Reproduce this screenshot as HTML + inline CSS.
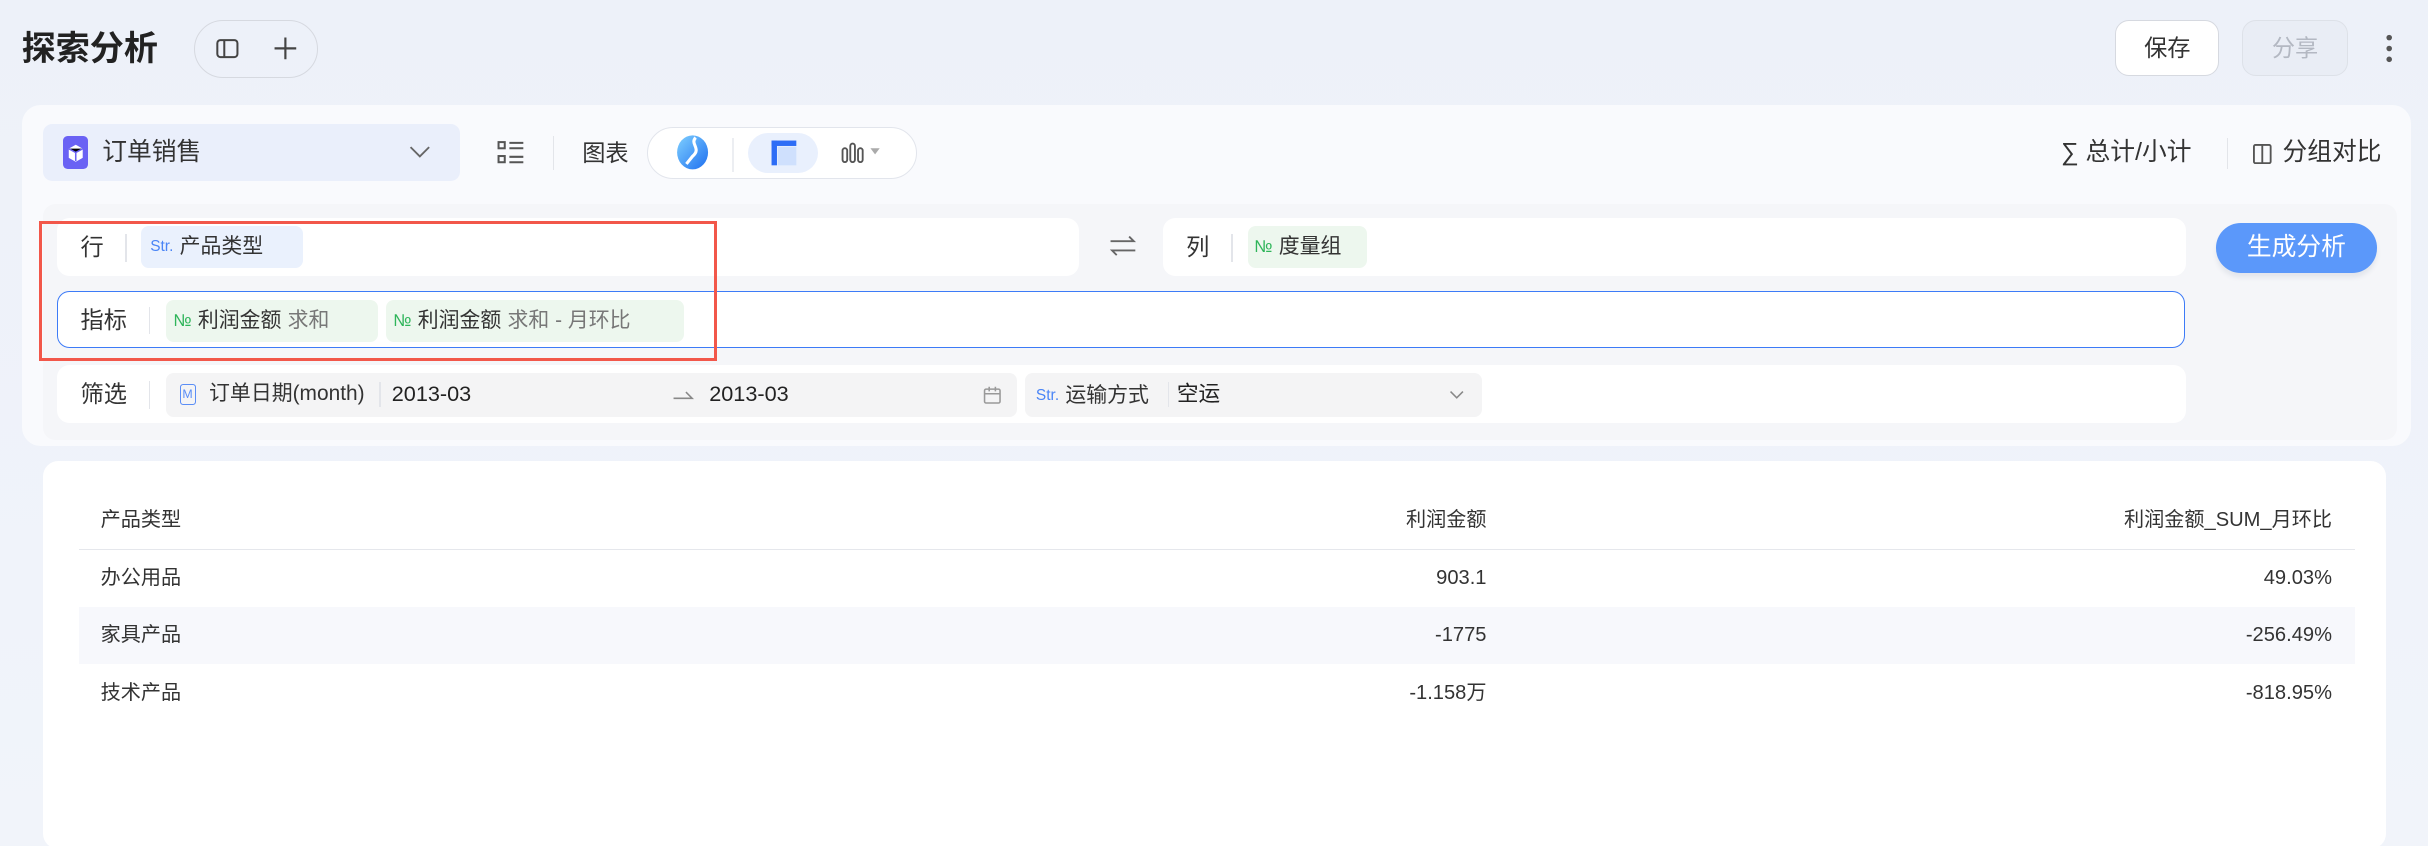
<!DOCTYPE html>
<html><head><meta charset="utf-8"><style>
html,body{margin:0;padding:0;width:2428px;height:846px;overflow:hidden;background:#eef2f9;}
#w{zoom:1.54847;width:1568px;height:547px;position:relative;font-family:"Liberation Sans","Noto Sans CJK SC",sans-serif;color:#333;background:linear-gradient(180deg,#edf1f9 0%,#f1f4fa 100%);}
.a{position:absolute;line-height:20px;white-space:nowrap;}
.t14{font-size:14px;}
.box{background:#fff;border-radius:8px;}
.lbl{font-size:15px;color:#333;}
.sep{width:1px;background:#e3e5ea;}
.chip{border-radius:5px;font-size:13.5px;height:27px;display:flex;align-items:center;gap:4px;line-height:27px;}
.num{color:#2fb55a;font-size:11px;}
.str{color:#4a85f6;font-size:10px;}
td{font-size:13px;color:#333;line-height:16px;vertical-align:middle;}
</style></head><body><div id="w">
<div class="a" style="left:14px;top:17px;line-height:30px;font-size:22px;font-weight:bold;color:#222;">探索分析</div>
<div class="a" style="left:125px;top:13px;width:79px;height:36px;border:1px solid #d6d9e0;border-radius:19px;"></div>
<svg class="a" style="left:139px;top:24px" width="16" height="16" viewBox="0 0 16 16"><rect x="1.5" y="2" width="13" height="11" rx="2" fill="none" stroke="#444" stroke-width="1.3"/><line x1="6" y1="2" x2="6" y2="13" stroke="#444" stroke-width="1.3"/></svg>
<svg class="a" style="left:176px;top:23px" width="16" height="16"><path d="M8 1v14M1 8h14" stroke="#444" stroke-width="1.4"/></svg>
<div class="a" style="left:1366px;top:13px;width:66px;height:35px;border:1px solid #d6d9e0;border-radius:9px;background:#fff;text-align:center;line-height:35px;font-size:15px;color:#333;">保存</div>
<div class="a" style="left:1448px;top:13px;width:67px;height:35px;border:1px solid #dde1e8;border-radius:9px;background:#e9edf5;text-align:center;line-height:35px;font-size:15px;color:#b3b8c2;">分享</div>
<svg class="a" style="left:1539px;top:21px" width="8" height="22"><circle cx="4" cy="3" r="1.8" fill="#555"/><circle cx="4" cy="10" r="1.8" fill="#555"/><circle cx="4" cy="17" r="1.8" fill="#555"/></svg>

<div class="a" style="left:14px;top:68px;width:1543px;height:220px;background:#f9fafd;border-radius:12px;"></div>
<div class="a" style="left:28px;top:80px;width:269px;height:37px;background:#eaeffb;border-radius:6px;"></div>
<div class="a" style="left:41px;top:88px;width:16px;height:21px;background:#6a62f4;border-radius:3px;"></div>
<svg class="a" style="left:44px;top:93px" width="10" height="12"><path d="M5 0.5L9.5 3v6L5 11.5 0.5 9V3z" fill="#fff"/><path d="M5 5v6M0.5 3L5 5.5 9.5 3" stroke="#6a62f4" stroke-width="1"/></svg>
<div class="a" style="left:66px;top:89px;font-size:16px;color:#333;">订单销售</div>
<svg class="a" style="left:264px;top:93px" width="14" height="10"><path d="M1 2l6 6 6-6" fill="none" stroke="#666" stroke-width="1.2"/></svg>
<svg class="a" style="left:321px;top:90px" width="18" height="18"><g fill="none" stroke="#555" stroke-width="1.3"><rect x="1" y="2" width="4" height="4"/><rect x="1" y="11" width="4" height="4"/><path d="M8 2.5h9M8 6h9M8 11.5h9M8 15h9"/></g></svg>
<div class="a sep" style="left:357px;top:88px;height:22px;"></div>
<div class="a" style="left:376px;top:89px;font-size:15px;">图表</div>
<div class="a" style="left:418px;top:82px;width:173px;height:32px;border:1px solid #e2e5ec;border-radius:17px;background:#fff;"></div>
<svg class="a" style="left:435px;top:86px" width="24" height="25"><defs><linearGradient id="g" x1="0" y1="0" x2="1" y2="1"><stop offset="0" stop-color="#7fd0ff"/><stop offset="1" stop-color="#1e6ff0"/></linearGradient></defs><ellipse cx="12" cy="12.5" rx="10" ry="11" fill="url(#g)"/><path d="M14 3c-4 4 4 7-2 12l-4 5" stroke="#fff" stroke-width="2" fill="none"/></svg>
<div class="a sep" style="left:473px;top:89px;height:22px;background:#eceef2"></div>
<div class="a" style="left:483px;top:86px;width:45px;height:26px;background:#e9f0fd;border-radius:13px;"></div>
<svg class="a" style="left:497px;top:90px" width="18" height="18"><rect x="1" y="1" width="16" height="3.5" fill="#2d6df6"/><rect x="1" y="1" width="3.5" height="16" fill="#2d6df6"/><rect x="5" y="5" width="12" height="12" fill="#cfe0fd"/></svg>
<svg class="a" style="left:543px;top:92px" width="26" height="14"><g fill="none" stroke="#555" stroke-width="1.2"><rect x="1" y="4" width="3" height="9" rx="1.5"/><rect x="6" y="1" width="3" height="12" rx="1.5"/><rect x="11" y="4" width="3" height="9" rx="1.5"/></g><path d="M19 4h6l-3 4z" fill="#aaa"/></svg>
<div class="a" style="left:1331px;top:89px;font-size:16px;color:#333;">∑ 总计/小计</div>
<div class="a sep" style="left:1438px;top:89px;height:20px;"></div>
<svg class="a" style="left:1455px;top:93px" width="12" height="13"><g fill="none" stroke="#555" stroke-width="1.2"><rect x="0.6" y="0.6" width="10.8" height="11.8" rx="1"/><path d="M6 0.6v11.8"/></g></svg>
<div class="a" style="left:1474px;top:89px;font-size:16px;color:#333;">分组对比</div>

<div class="a" style="left:28px;top:132px;width:1520px;height:152px;background:#f5f6f9;border-radius:8px;"></div>
<div class="a box" style="left:37px;top:141px;width:660px;height:37px;"></div>
<div class="a lbl" style="left:52px;top:150px;">行</div>
<div class="a sep" style="left:81px;top:151px;height:18px;"></div>
<div class="a chip" style="left:91px;top:146px;width:105px;background:#eaf1fd;"><span class="str" style="margin-left:6px;">Str.</span>产品类型</div>
<svg class="a" style="left:716px;top:152px" width="18" height="14"><g fill="none" stroke="#666" stroke-width="1.2"><path d="M1 4h15l-3-3M17 10H2l3 3"/></g></svg>
<div class="a box" style="left:751px;top:141px;width:661px;height:37px;"></div>
<div class="a lbl" style="left:766px;top:150px;">列</div>
<div class="a sep" style="left:795px;top:151px;height:18px;"></div>
<div class="a chip" style="left:806px;top:146px;width:77px;background:#edf7ee;"><span class="num" style="margin-left:4px">№</span>度量组</div>
<div class="a" style="left:1431px;top:144px;width:104px;height:32px;background:#5b98fa;border-radius:16px;color:#fff;font-size:16px;text-align:center;line-height:32px;box-shadow:0 3px 3px #e3e6ec;">生成分析</div>
<div class="a box" style="left:37px;top:188px;width:1374px;height:37px;border:1px solid #3d7bf7;box-sizing:border-box;"></div>
<div class="a lbl" style="left:52px;top:197px;">指标</div>
<div class="a sep" style="left:96px;top:198px;height:18px;"></div>
<div class="a chip" style="left:107px;top:194px;width:137px;background:#edf7ee;"><span class="num" style="margin-left:5px">№</span>利润金额<span style="color:#777">求和</span></div>
<div class="a chip" style="left:249px;top:194px;width:193px;background:#edf7ee;"><span class="num" style="margin-left:5px">№</span>利润金额<span style="color:#777">求和 - 月环比</span></div>
<div class="a box" style="left:37px;top:236px;width:1375px;height:37px;"></div>
<div class="a lbl" style="left:52px;top:245px;">筛选</div>
<div class="a sep" style="left:96px;top:246px;height:18px;"></div>
<div class="a" style="left:107px;top:241px;width:550px;height:28px;background:#f4f4f5;border-radius:5px;"></div>
<div class="a" style="left:116px;top:248px;width:9px;height:12px;border:1px solid #5b8ef6;border-radius:2px;font-size:8px;color:#5b8ef6;text-align:center;line-height:12px;">M</div>
<div class="a t14" style="left:135px;top:245px;font-size:13.5px;">订单日期(month)</div>
<div class="a sep" style="left:245px;top:247px;height:16px;"></div>
<div class="a t14" style="left:253px;top:245px;color:#222;">2013-03</div>
<svg class="a" style="left:434px;top:251px" width="14" height="8"><path d="M1 6h12L9 2" fill="none" stroke="#888" stroke-width="1"/></svg>
<div class="a t14" style="left:458px;top:245px;color:#222;">2013-03</div>
<svg class="a" style="left:635px;top:249px" width="12" height="12"><g fill="none" stroke="#999" stroke-width="1"><rect x="1" y="2" width="10" height="9" rx="1"/><path d="M1 5h10M4 0.5v3M8 0.5v3"/></g></svg>
<div class="a" style="left:662px;top:241px;width:295px;height:28px;background:#f4f4f5;border-radius:5px;"></div>
<div class="a chip" style="left:669px;top:242px;font-size:13.5px;"><span class="str">Str.</span>运输方式</div>
<div class="a sep" style="left:754px;top:247px;height:16px;"></div>
<div class="a t14" style="left:760px;top:245px;color:#222;">空运</div>
<svg class="a" style="left:936px;top:252px" width="10" height="7"><path d="M1 1l4 4 4-4" fill="none" stroke="#888" stroke-width="1"/></svg>

<div class="a" style="left:25px;top:143px;width:434px;height:86px;border:2px solid #f2574a;"></div>

<div class="a" style="left:28px;top:298px;width:1513px;height:250px;background:#fff;border-radius:10px;"></div>
<table class="a" style="left:51px;top:318px;width:1470px;border-collapse:collapse;table-layout:fixed;">
<colgroup><col style="width:455px"><col style="width:455px"><col style="width:560px"></colgroup>
<tr style="height:37px;border-bottom:1px solid #e5e7ec"><td style="padding-left:14px">产品类型</td><td style="text-align:right">利润金额</td><td style="text-align:right;padding-right:15px">利润金额_SUM_月环比</td></tr>
<tr style="height:37px"><td style="padding-left:14px">办公用品</td><td style="text-align:right">903.1</td><td style="text-align:right;padding-right:15px">49.03%</td></tr>
<tr style="height:37px;background:#f7f8fc"><td style="padding-left:14px">家具产品</td><td style="text-align:right">-1775</td><td style="text-align:right;padding-right:15px">-256.49%</td></tr>
<tr style="height:37px"><td style="padding-left:14px">技术产品</td><td style="text-align:right">-1.158万</td><td style="text-align:right;padding-right:15px">-818.95%</td></tr>
</table>
</div></body></html>
